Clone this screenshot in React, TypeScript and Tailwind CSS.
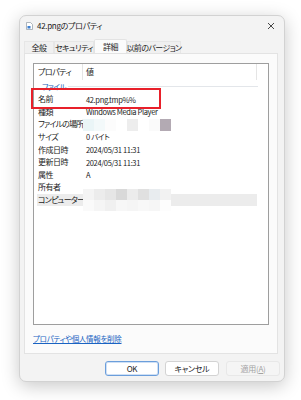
import React from 'react'

const font = "font-['Noto_Sans_CJK_JP','Noto_Sans',sans-serif] [font-feature-settings:'palt'_1]"

interface Row {
  label: string
  value?: string
}

const rows: Row[] = [
  { label: '名前', value: '42.png.tmp%%' },
  { label: '種類', value: 'Windows Media Player' },
  { label: 'ファイルの場所' },
  { label: 'サイズ', value: '0 バイト' },
  { label: '作成日時', value: '2024/05/31 11:31' },
  { label: '更新日時', value: '2024/05/31 11:31' },
  { label: '属性', value: 'A' },
  { label: '所有者' },
  { label: 'コンピューター' },
]

const pathCells = ['#eaf5f7', '#f3f9fa', '#fcfcfc', '#ffffff', '#ededed', '#ffffff', '#fafafa', '#b3aab3']
const pcCells = [
  '#f4f4f4', '#ececec', '#e6e6e6', '#d9d9d9', '#ececec', '#e0e0e0', '#e8ecef', '#f2f2f2',
  '#fafafa', '#f5f5f5', '#f0f0f0', '#f7f7f7', '#f5f5f5', '#f8f8f8', '#f6f6f6', '#fdfdfd',
]

const tabs = [
  { label: '全般', w: 'w-[30px]' },
  { label: 'セキュリティ', w: 'w-[40px]' },
  { label: '詳細', w: 'w-[33px]', active: true },
  { label: '以前のバージョン', w: 'w-[54px]' },
]

export default function App() {
  return (
    <div className={`w-[301px] h-[400px] bg-white pt-[15px] pl-[19px] text-[#1b1b1b] ${font}`}>
      <div className="w-[266px] h-[367px] flex flex-col rounded-[7px] border border-[#d2d2d2] bg-[#f3f3f3] shadow-[0_4px_18px_rgba(0,0,0,0.22)]">
        {/* Title bar */}
        <div className="h-[17px] mt-[1px] flex items-center pl-[6px] pr-[6px]">
          <svg width="7" height="8" viewBox="0 0 7 8" className="mr-[4px]">
            <path d="M0.5 0.5h4l2 2v5h-6z" fill="#fff" stroke="#9aa4ad" strokeWidth="0.8" />
            <rect x="1.5" y="4" width="3" height="2.5" fill="#3b7fd1" />
          </svg>
          <span className="text-[8px] leading-none tracking-[-0.3px]">42.pngのプロパティ</span>
          <svg width="8" height="8" viewBox="0 0 8 8" className="ml-auto mr-[3px]">
            <path d="M1 1l6 6M7 1l-6 6" stroke="#333" strokeWidth="0.9" />
          </svg>
        </div>

        {/* Tabs */}
        <div className="mt-[5px] px-[4px] flex items-end h-[14px] text-[8px] leading-none tracking-[-0.6px] whitespace-nowrap">
          {tabs.map((t) => (
            <div
              key={t.label}
              className={`${t.w} flex items-center justify-center ${
                t.active
                  ? 'h-[14px] bg-[#fbfbfb] border border-b-0 border-[#e3e3e3] rounded-t-[2px]'
                  : 'h-[12px] bg-[#f0f0f0] border border-b-0 border-[#e6e6e6]'
              }`}
            >
              {t.label}
            </div>
          ))}
        </div>

        {/* Tab page */}
        <div className="mx-[4px] w-[254px] h-[301px] border border-[#e3e3e3] bg-[#fbfbfb] px-[8px] pt-[9px] flex flex-col">
          <div className="relative w-[236px] h-[262px] border border-[#9e9e9e] bg-white text-[8px] leading-none tracking-[-0.5px] whitespace-nowrap">
            {/* header */}
            <div className="flex h-[16px] items-center">
              <div className="w-[49px] h-full flex items-center pl-[4px] border-r border-[#e5e5e5]">プロパティ</div>
              <div className="w-[174px] h-full flex items-center pl-[3px] border-r border-[#e5e5e5]">値</div>
            </div>
            {/* group */}
            <div className="flex items-center h-[13px] pl-[8px] pr-[10px] text-[#1b62b8] text-[7.5px]">
              <span>ファイル</span>
              <div className="flex-1 ml-[2px] h-px bg-[#e3e6ea]" />
            </div>
            {rows.map((r) => (
              <div
                key={r.label}
                className={`flex items-center h-[12.6px] ${r.label === 'コンピューター' ? 'bg-[#ececec] ml-[3px] w-[220px]' : ''}`}
              >
                <div
                  className={`${r.label === 'コンピューター' ? 'pl-[1px] w-[46px] tracking-[-0.8px]' : 'pl-[4px] w-[49px]'} ${
                    r.label === 'ファイルの場所' ? 'tracking-[-0.9px]' : ''
                  }`}
                >
                  {r.label}
                </div>
                <div className="pl-[3px] text-[7.5px] tracking-[-0.35px]">{r.value}</div>
              </div>
            ))}

            {/* redaction mosaics */}
            <div className="absolute left-[49px] top-[55px] flex">
              {pathCells.map((c, i) => (
                <div key={i} className="w-[11px] h-[12px]" style={{ backgroundColor: c }} />
              ))}
            </div>
            <div className="absolute left-[49px] top-[125px] grid grid-cols-8">
              {pcCells.map((c, i) => (
                <div key={i} className="w-[11px] h-[11px]" style={{ backgroundColor: c }} />
              ))}
            </div>

            {/* highlight annotation */}
            <div className="absolute left-[-3px] top-[24px] w-[130px] h-[21px] border-2 border-[#e8202a]" />
          </div>

          <div className="mt-[10px] text-[7.5px] leading-none tracking-[-0.3px] text-[#1a63c2] underline">
            プロパティや個人情報を削除
          </div>
        </div>

        {/* Buttons */}
        <div className="flex justify-end gap-[6px] pr-[4px] mt-[7px] text-[8px] leading-none tracking-[-0.3px]">
          <button className="w-[54px] h-[15px] rounded-[3px] bg-white border border-[#6b9edb] ring-1 ring-inset ring-[#cfe0f5]">
            OK
          </button>
          <button className="w-[54px] h-[15px] rounded-[3px] bg-white border border-[#d3d3d3]">キャンセル</button>
          <button className="w-[54px] h-[15px] rounded-[3px] bg-[#f5f5f5] border border-[#e8e8e8] text-[#a3a3a3] ml-[1px]">
            適用(<span className="underline">A</span>)
          </button>
        </div>
      </div>
    </div>
  )
}
